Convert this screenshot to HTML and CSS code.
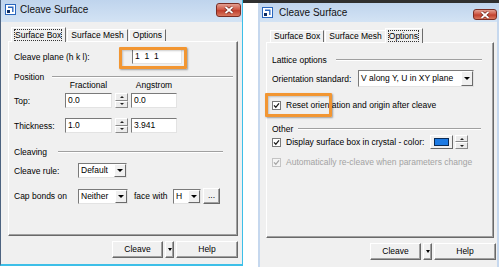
FILE: index.html
```html
<!DOCTYPE html>
<html lang="en">
<head>
    <meta charset="UTF-8">
    <meta name="viewport" content="width=device-width, initial-scale=1.0">
    <title>Cleave Surface</title>
    <link rel="stylesheet" href="styles.css">
</head>
<body>
    <!-- Surface Box tab -->
    <div class="window win-a">
        <div class="titlebar">
            <svg class="app-icon" viewBox="0 0 11 11">
                <rect x="0.5" y="0.5" width="10" height="10" fill="#fff" stroke="#2a67bd"/>
                <path d="M3 3.2 H7.8 V8" fill="none" stroke="#2a67bd" stroke-width="1.4"/>
                <rect x="2" y="6" width="3" height="3" fill="#0d2d63"/>
            </svg>
            <span class="title">Cleave Surface</span>
            <span class="close">
                <svg viewBox="0 0 10 8"><path d="M1.5 1 L8.5 7 M8.5 1 L1.5 7" stroke="#6d2219" stroke-width="3.2"/><path d="M1.5 1 L8.5 7 M8.5 1 L1.5 7" stroke="#fff" stroke-width="1.8"/></svg>
            </span>
        </div>
        <div class="client">
            <div class="tabs">
                <div class="tab active"><span class="focus">Surface Box</span></div>
                <div class="tab">Surface Mesh</div>
                <div class="tab">Options</div>
            </div>
            <div class="panel">
                <div class="row r-plane">
                    <span class="lbl lbl-plane">Cleave plane (h k l):</span>
                    <div class="input w-plane">1  1  1</div>
                </div>

                <div class="group-head head-position">
                    <span>Position</span>
                    <span class="rule"></span>
                </div>
                <div class="colhead">
                    <span class="col-frac">Fractional</span>
                    <span class="col-ang">Angstrom</span>
                </div>
                <div class="row r-top">
                    <span class="lbl lbl-pos">Top:</span>
                    <div class="input w-frac">0.0</div>
                    <div class="spin"><i class="up"></i><i class="down"></i></div>
                    <div class="input w-ang">0.0</div>
                </div>
                <div class="row r-thick">
                    <span class="lbl lbl-pos">Thickness:</span>
                    <div class="input w-frac">1.0</div>
                    <div class="spin"><i class="up"></i><i class="down"></i></div>
                    <div class="input w-ang">3.941</div>
                </div>

                <div class="group-head head-cleaving">
                    <span>Cleaving</span>
                    <span class="rule"></span>
                </div>
                <div class="row r-rule">
                    <span class="lbl lbl-cleave">Cleave rule:</span>
                    <div class="select w-rule"><span class="select-text">Default</span><span class="select-btn"></span></div>
                </div>
                <div class="row r-cap">
                    <span class="lbl lbl-cleave">Cap bonds on</span>
                    <div class="select w-cap"><span class="select-text">Neither</span><span class="select-btn"></span></div>
                    <span class="lbl lbl-face">face with</span>
                    <div class="select w-atom"><span class="select-text">H</span><span class="select-btn"></span></div>
                    <div class="btn btn-dots">...</div>
                </div>
            </div>
            <div class="actions">
                <div class="btn btn-cleave">Cleave</div>
                <div class="btn btn-drop"><span class="caret"></span></div>
                <div class="btn btn-help">Help</div>
            </div>
        </div>
        <div class="highlight hl-plane"></div>
    </div>

    <!-- Options tab -->
    <div class="window win-b">
        <div class="titlebar">
            <svg class="app-icon" viewBox="0 0 11 11">
                <rect x="0.5" y="0.5" width="10" height="10" fill="#fff" stroke="#2a67bd"/>
                <path d="M3 3.2 H7.8 V8" fill="none" stroke="#2a67bd" stroke-width="1.4"/>
                <rect x="2" y="6" width="3" height="3" fill="#0d2d63"/>
            </svg>
            <span class="title">Cleave Surface</span>
            <span class="close">
                <svg viewBox="0 0 10 8"><path d="M1.5 1 L8.5 7 M8.5 1 L1.5 7" stroke="#6d2219" stroke-width="3.2"/><path d="M1.5 1 L8.5 7 M8.5 1 L1.5 7" stroke="#fff" stroke-width="1.8"/></svg>
            </span>
        </div>
        <div class="client">
            <div class="tabs">
                <div class="tab">Surface Box</div>
                <div class="tab">Surface Mesh</div>
                <div class="tab active"><span class="focus">Options</span></div>
            </div>
            <div class="panel">
                <div class="group-head head-lattice">
                    <span>Lattice options</span>
                    <span class="rule"></span>
                </div>
                <div class="row r-orient">
                    <span class="lbl lbl-orient">Orientation standard:</span>
                    <div class="select w-orient"><span class="select-text">V along Y, U in XY plane</span><span class="select-btn"></span></div>
                </div>
                <div class="row r-reset">
                    <span class="check"><svg viewBox="0 0 7 7"><path d="M1 3.4 L2.8 5.3 L6 1.4" fill="none" stroke="#1a1a1a" stroke-width="1.3"/></svg></span>
                    <span>Reset orientation and origin after cleave</span>
                </div>

                <div class="group-head head-other">
                    <span>Other</span>
                    <span class="rule"></span>
                </div>
                <div class="row r-display">
                    <span class="check"><svg viewBox="0 0 7 7"><path d="M1 3.4 L2.8 5.3 L6 1.4" fill="none" stroke="#1a1a1a" stroke-width="1.3"/></svg></span>
                    <span>Display surface box in crystal - color:</span>
                    <div class="swatch"><span class="swatch-fill"></span></div>
                    <div class="spin spin-sm"><i class="up"></i><i class="down"></i></div>
                </div>
                <div class="row r-auto disabled">
                    <span class="check"><svg viewBox="0 0 7 7"><path d="M1 3.4 L2.8 5.3 L6 1.4" fill="none" stroke="#a6a6a6" stroke-width="1.3"/></svg></span>
                    <span>Automatically re-cleave when parameters change</span>
                </div>
            </div>
            <div class="actions">
                <div class="btn btn-cleave">Cleave</div>
                <div class="btn btn-drop"><span class="caret"></span></div>
                <div class="btn btn-help">Help</div>
            </div>
        </div>
        <div class="highlight hl-reset"></div>
    </div>
</body>
</html>
```

FILE: styles.css
```css
* {
    box-sizing: border-box;
}

body {
    margin: 0;
    width: 499px;
    height: 267px;
    overflow: hidden;
    display: flex;
    align-items: flex-start;
    gap: 15px;
    background: linear-gradient(#2f2f2f, #2f2f2f) no-repeat 243px 0 / 256px 3px, #fff;
    font-family: "Liberation Sans", Arial, sans-serif;
    font-size: 8.5px;
    color: #000;
}

/* window frame */
.window {
    position: relative;
    display: flex;
    flex-direction: column;
    flex-shrink: 0;
}

.win-a {
    width: 243px;
    height: 266px;
    border-left: 1px solid #4d6380;
    border-right: 1px solid #3dbfe8;
    border-bottom: 2px solid #3dbfe8;
}

.win-b {
    width: 241px;
    height: 267px;
    margin-top: 3px;
    border-left: 2px solid #c6d8ee;
    border-right: 2px solid #c6d8ee;
}

.titlebar {
    display: flex;
    align-items: flex-start;
    flex-shrink: 0;
    background: linear-gradient(#bfd4ed, #d3e3f4);
}

.win-a .titlebar {
    height: 22px;
    padding: 4px 1px 0 4px;
}

.win-b .titlebar {
    height: 19px;
    padding: 4px 0 0 2px;
}

.app-icon {
    width: 11px;
    height: 11px;
    flex-shrink: 0;
}

.title {
    font-size: 10px;
    line-height: 12px;
    margin-left: 4px;
    color: #111;
}

.win-b .title {
    margin-left: 6px;
}

.close {
    margin-left: auto;
    display: flex;
    align-items: center;
    justify-content: center;
    border: 1px solid #7a2d24;
    border-radius: 3px;
    background: linear-gradient(#e3a093, #cf5a48 45%, #c0402e 55%, #d9785f);
}

.win-a .close {
    width: 25px;
    height: 14px;
    margin-top: -1px;
}

.win-b .close {
    width: 24px;
    height: 11px;
    margin-top: 2px;
}

.close svg {
    width: 10px;
    height: 8px;
}

/* client area */
.client {
    flex: 1;
    display: flex;
    flex-direction: column;
    background-color: #f0f0f0;
}

.win-a .client {
    padding: 5px 0 0 7px;
}

.win-b .client {
    padding: 6px 0 0 6px;
}

.tabs {
    display: flex;
    align-items: flex-end;
    height: 14px;
    position: relative;
    z-index: 1;
}

.win-a .tabs {
    padding-left: 5px;
}

.win-b .tabs {
    padding-left: 4px;
}

.tab {
    height: 12px;
    line-height: 11px;
    padding: 0 3px;
    margin-right: 1px;
    white-space: nowrap;
    border-top: 1px solid #fff;
    border-left: 1px solid #fff;
    border-right: 1px solid #6b6b6b;
}

.tab.active {
    height: 15px;
    line-height: 12px;
    padding: 1px 4px 0 3px;
    margin-left: -2px;
    margin-bottom: -1px;
    background-color: #f0f0f0;
}

.focus {
    outline: 1px dotted #333;
    outline-offset: 0;
}

.panel {
    border: 1px solid;
    border-color: #fff #696969 #696969 #fff;
    box-shadow: inset -1px -1px 0 #a0a0a0;
    background-color: #f0f0f0;
    padding-left: 5px;
}

.win-a .panel {
    width: 230px;
    height: 195px;
}

.win-b .panel {
    width: 228px;
    height: 196px;
}

/* rows */
.row {
    display: flex;
    align-items: center;
}

.lbl {
    flex-shrink: 0;
    white-space: nowrap;
}

.lbl-plane {
    width: 118px;
}

.lbl-pos {
    width: 51px;
}

.lbl-cleave {
    width: 64px;
}

.lbl-face {
    width: 39px;
    margin-left: 6px;
}

.lbl-orient {
    width: 86px;
}

.r-plane {
    margin-top: 7px;
    height: 15px;
}

.r-top {
    margin-top: 4px;
    height: 15px;
}

.r-thick {
    margin-top: 10px;
    height: 15px;
}

.r-rule {
    margin-top: 6px;
    height: 15px;
}

.r-cap {
    margin-top: 10px;
    height: 16px;
}

.r-orient {
    margin-top: 5px;
    height: 17px;
}

.r-reset {
    margin-top: 13px;
    height: 10px;
}

.r-display {
    margin-top: 1px;
    height: 14px;
}

.r-auto {
    margin-top: 8px;
    height: 10px;
}

/* group headings with etched rule */
.group-head {
    display: flex;
    align-items: center;
    height: 10px;
    line-height: 10px;
    white-space: nowrap;
}

.rule {
    flex: 1;
    height: 2px;
    border-top: 1px solid #a0a0a0;
    border-bottom: 1px solid #fff;
}

.head-position {
    margin-top: 8px;
}

.head-position .rule {
    margin: 0 4px 0 8px;
}

.head-cleaving {
    margin-top: 14px;
}

.head-cleaving .rule {
    margin: 0 14px 0 11px;
}

.head-lattice {
    margin-top: 12px;
}

.head-lattice .rule {
    margin: 0 11px 0 9px;
}

.head-other {
    margin-top: 14px;
}

.head-other .rule {
    margin: 0 12px 0 5px;
}

.colhead {
    display: flex;
    height: 8px;
    line-height: 8px;
    margin-top: -1px;
    white-space: nowrap;
}

.col-frac {
    width: 47px;
    margin-left: 51px;
    text-align: center;
}

.col-ang {
    width: 46px;
    margin-left: 19px;
    text-align: center;
}

/* fields */
.input {
    height: 15px;
    line-height: 13px;
    padding-left: 2px;
    white-space: pre;
    background-color: #fff;
    border: 1px solid;
    border-color: #7a7a7a #e3e3e3 #e3e3e3 #7a7a7a;
    flex-shrink: 0;
}

.w-plane {
    width: 50px;
}

.w-frac {
    width: 47px;
}

.w-ang {
    width: 46px;
}

.spin {
    display: flex;
    flex-direction: column;
    width: 13px;
    height: 15px;
    margin: 0 3px;
    flex-shrink: 0;
}

.spin i {
    flex: 1;
    display: flex;
    align-items: center;
    justify-content: center;
    border: 1px solid;
    border-color: #fff #8a8a8a #8a8a8a #fff;
    background-color: #ececec;
}

.spin .up::after {
    content: "";
    border-left: 2px solid transparent;
    border-right: 2px solid transparent;
    border-bottom: 2px solid #222;
}

.spin .down::after {
    content: "";
    border-left: 2px solid transparent;
    border-right: 2px solid transparent;
    border-top: 2px solid #222;
}

.spin-sm {
    height: 14px;
    margin: 0 25px 0 2px;
}

.select {
    display: flex;
    height: 15px;
    flex-shrink: 0;
    background-color: #fff;
    border: 1px solid;
    border-color: #7a7a7a #e3e3e3 #e3e3e3 #7a7a7a;
}

.select-text {
    flex: 1;
    padding-left: 2px;
    line-height: 13px;
    white-space: nowrap;
    overflow: hidden;
}

.select-btn {
    width: 12px;
    display: flex;
    align-items: center;
    justify-content: center;
    background-color: #f0f0f0;
    border: 1px solid;
    border-color: #fff #6b6b6b #6b6b6b #fff;
}

.select-btn::after {
    content: "";
    border-left: 3px solid transparent;
    border-right: 3px solid transparent;
    border-top: 3px solid #000;
}

.w-rule {
    width: 49px;
}

.w-cap {
    width: 50px;
}

.w-atom {
    width: 28px;
}

.w-orient {
    width: 116px;
    height: 17px;
}

.w-orient .select-text {
    line-height: 15px;
}

/* buttons */
.btn {
    height: 17px;
    line-height: 15px;
    text-align: center;
    background-color: #f0f0f0;
    border: 1px solid;
    border-color: #fff #696969 #696969 #fff;
    box-shadow: inset -1px -1px 0 #a0a0a0;
    flex-shrink: 0;
}

.btn-dots {
    width: 17px;
    height: 16px;
    line-height: 12px;
    margin-left: 2px;
}

.actions {
    display: flex;
    justify-content: flex-end;
    height: 17px;
    margin-top: 5px;
}

.win-a .actions {
    width: 230px;
}

.win-b .actions {
    width: 230px;
}

.btn-cleave {
    width: 51px;
}

.btn-drop {
    width: 9px;
    margin-left: 2px;
    display: flex;
    align-items: center;
    justify-content: center;
}

.caret {
    border-left: 2px solid transparent;
    border-right: 2px solid transparent;
    border-top: 3px solid #000;
}

.btn-help {
    width: 62px;
    margin-left: 2px;
}

/* check boxes */
.check {
    width: 9px;
    height: 9px;
    margin-right: 5px;
    display: flex;
    align-items: center;
    justify-content: center;
    background-color: #fff;
    border: 1px solid #7a7a7a;
    flex-shrink: 0;
}

.check svg {
    width: 7px;
    height: 7px;
}

.disabled {
    color: #a3a3a3;
}

.disabled .check {
    background-color: #f4f4f4;
    border-color: #c4c4c4;
}

.swatch {
    margin-left: auto;
    width: 23px;
    height: 14px;
    padding: 2px 3px;
    background-color: #f0f0f0;
    border: 1px solid;
    border-color: #fff #696969 #696969 #fff;
}

.swatch-fill {
    display: block;
    height: 100%;
    background-color: #1c7ae4;
    border: 1px solid #0a2a55;
}

/* orange annotation boxes */
.highlight {
    position: absolute;
    border: 3px solid #f29632;
    border-radius: 1px;
    box-shadow: 1px 1px 2px rgba(0, 0, 0, 0.35), inset 1px 1px 2px rgba(0, 0, 0, 0.2);
}

.hl-plane {
    left: 118px;
    top: 47px;
    width: 68px;
    height: 22px;
}

.hl-reset {
    left: 5px;
    top: 90px;
    width: 67px;
    height: 24px;
}
```
